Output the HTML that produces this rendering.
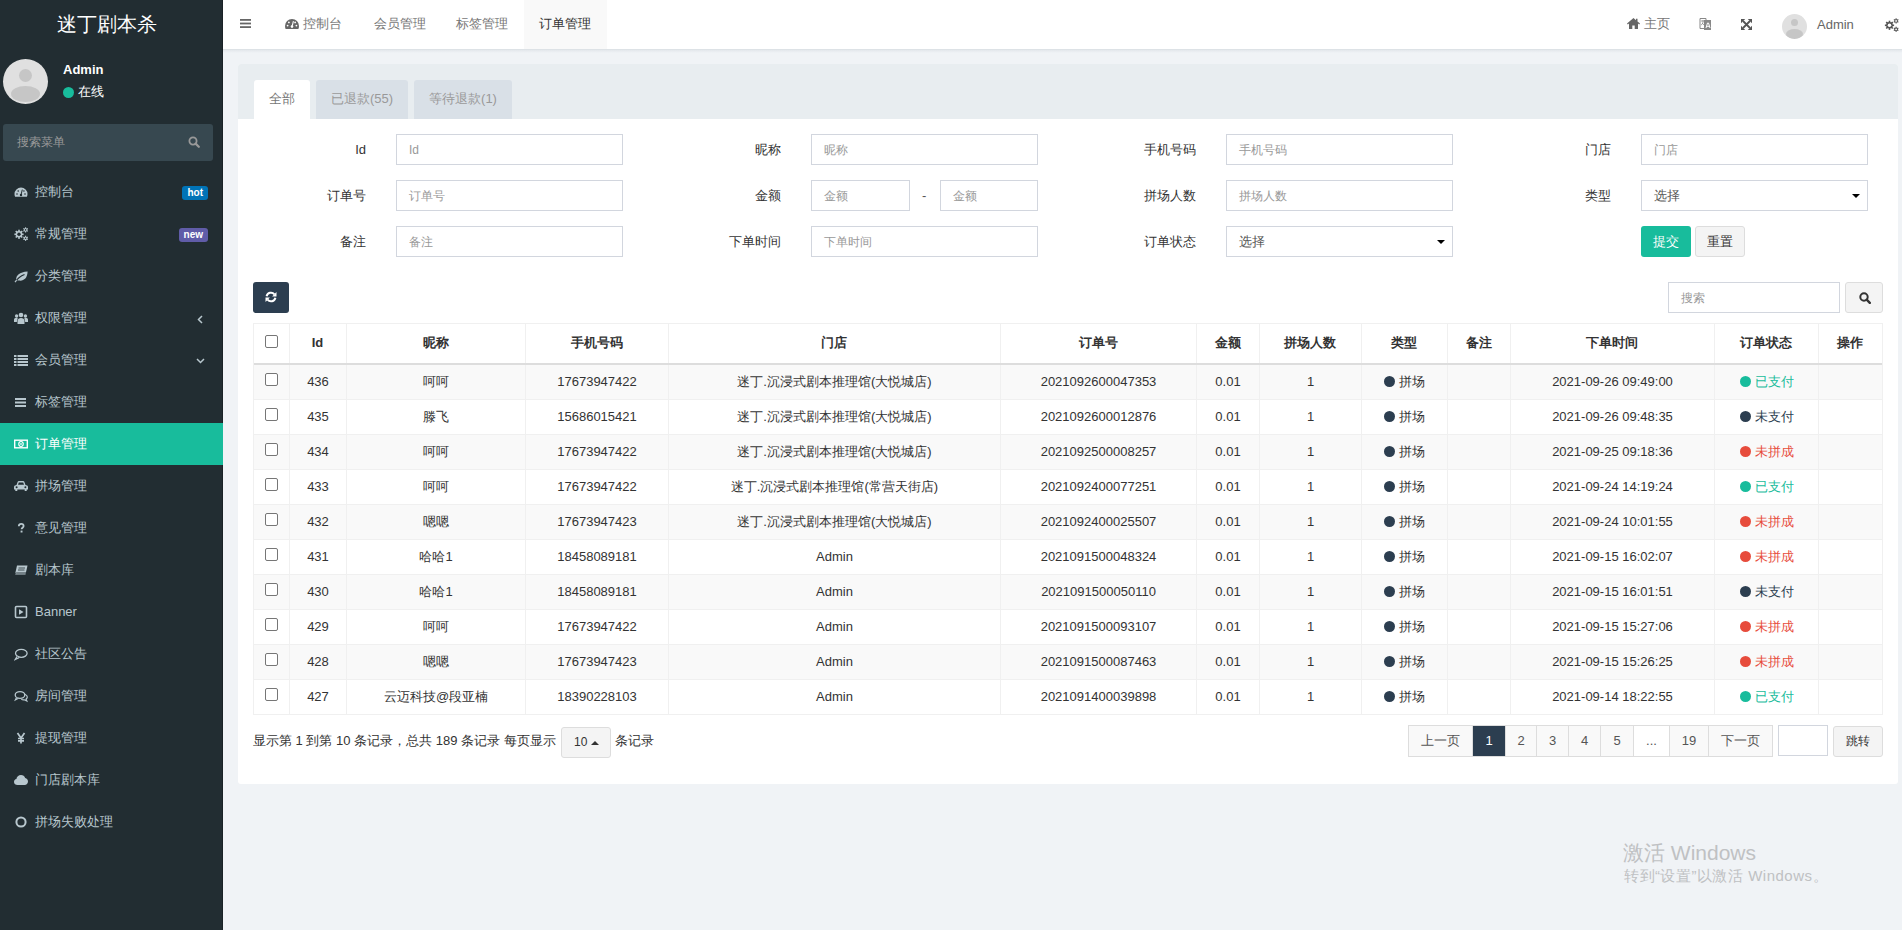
<!DOCTYPE html>
<html>
<head>
<meta charset="utf-8">
<style>
*{box-sizing:border-box;}
html,body{margin:0;padding:0;}
body{width:1902px;height:930px;overflow:hidden;position:relative;background:#f0f3f6;font-family:"Liberation Sans",sans-serif;font-size:13px;color:#333;}
.abs{position:absolute;}
svg{display:block;}
/* sidebar */
#side{position:absolute;left:0;top:0;width:223px;height:930px;background:#222d32;}
#side .edge{position:absolute;right:0;top:0;width:1px;height:930px;background:#1a2226;}
#logo{position:absolute;left:0;top:-1px;width:214px;height:50px;line-height:50px;text-align:center;color:#fff;font-size:20px;}
.menu{position:absolute;left:0;top:171px;width:223px;}
.mi{position:relative;height:42px;color:#b8c7ce;}
.mi .ic{position:absolute;left:14px;top:14px;width:14px;height:14px;}
.mi .tx{position:absolute;left:35px;top:13px;line-height:15px;}
.mi.act{background:#18bc9c;color:#fff;}
.badge{position:absolute;right:15px;top:15px;height:14px;line-height:14px;padding:0 5px;border-radius:3px;color:#fff;font-size:10px;font-weight:bold;}
/* header */
#hdr{position:absolute;left:223px;top:0;width:1679px;height:49px;background:#fff;}
#hdrline{position:absolute;left:223px;top:49px;width:1679px;height:4px;background:linear-gradient(#d9dee2,#e6eaee 40%,#f0f3f6);}
.nav{position:absolute;top:0;height:49px;line-height:48px;color:#777;}
/* panel */
#panel{position:absolute;left:238px;top:64px;width:1660px;height:720px;background:#fff;border-radius:3px;}
#ph{position:absolute;left:0;top:0;width:1660px;height:55px;background:#e8edf0;border-radius:3px 3px 0 0;}
.tab{position:absolute;top:16px;height:39px;line-height:37px;text-align:center;border-radius:3px 3px 0 0;color:#999;background:#d9e0e7;}
.tab.act{background:#fff;color:#777;}
.lbl{position:absolute;text-align:right;color:#333;line-height:31px;height:31px;}
.inp{position:absolute;height:31px;border:1px solid #d2d6de;background:#fff;color:#999;padding-left:12px;line-height:30px;font-size:12px;}
.sel{color:#555;font-size:13px;}
.caret{position:absolute;right:7px;top:13px;width:0;height:0;border-left:4px solid transparent;border-right:4px solid transparent;border-top:4px solid #000;}
.th{position:absolute;text-align:center;font-weight:bold;line-height:16px;color:#333;}
.td{position:absolute;text-align:center;line-height:16px;color:#333;white-space:nowrap;padding-left:1px;}
.cb{position:absolute;width:13px;height:13px;border:1px solid #767676;border-radius:2px;background:#fff;}
.vl{width:1px;background:#f0f0f0;}
.hl{height:1px;background:#f0f0f0;}
.dot{display:inline-block;width:11px;height:11px;border-radius:50%;margin-right:4px;vertical-align:-1px;}
.pgi{position:absolute;top:661px;height:32px;line-height:30px;text-align:center;border:1px solid #ddd;}
.btn{}
</style>
</head>
<body>

<!-- SIDEBAR -->
<div id="side">
  <div class="edge"></div>
  <div id="logo">迷丁剧本杀</div>
  <!-- avatar -->
  <div class="abs" style="left:3px;top:59px;width:45px;height:45px;border-radius:50%;background:#e0e0e0;overflow:hidden;">
    <div class="abs" style="left:16px;top:10px;width:13px;height:13px;border-radius:50%;background:#c6c6c6;"></div>
    <div class="abs" style="left:8px;top:27px;width:29px;height:16px;border-radius:50%;background:#c6c6c6;"></div>
  </div>
  <div class="abs" style="left:63px;top:62px;color:#fff;font-weight:bold;font-size:13px;line-height:16px;">Admin</div>
  <div class="abs" style="left:63px;top:87px;width:11px;height:11px;border-radius:50%;background:#18bc9c;"></div>
  <div class="abs" style="left:78px;top:84px;color:#fff;font-size:13px;line-height:16px;">在线</div>
  <!-- search -->
  <div class="abs" style="left:3px;top:124px;width:210px;height:37px;background:#374850;border-radius:3px;">
    <div class="abs" style="left:14px;top:11px;color:#999;font-size:12px;line-height:14px;">搜索菜单</div>
    <svg class="abs" style="left:185px;top:12px" width="12" height="12" viewBox="0 0 12 12"><circle cx="5" cy="5" r="3.6" fill="none" stroke="#999" stroke-width="1.8"/><path d="M7.6 7.6L10.8 10.8" stroke="#999" stroke-width="2.2" stroke-linecap="round"/></svg>
  </div>
  <div class="menu">
    <div class="mi"><svg class="ic" viewBox="0 0 14 14"><path d="M7 2.5A6.5 6.5 0 0 0 .5 9c0 1 .2 2 .6 2.8h11.8c.4-.8.6-1.8.6-2.8A6.5 6.5 0 0 0 7 2.5z" fill="#b8c7ce"/><circle cx="7" cy="10" r="1.2" fill="#222d32"/><path d="M7 10L8.3 4.6" stroke="#222d32" stroke-width="1"/><circle cx="3" cy="9" r=".8" fill="#222d32"/><circle cx="4.2" cy="6" r=".8" fill="#222d32"/><circle cx="11" cy="9" r=".8" fill="#222d32"/><circle cx="9.9" cy="6" r=".8" fill="#222d32"/></svg><span class="tx">控制台</span><span class="badge" style="background:#0073b7;">hot</span></div>
    <div class="mi"><svg class="ic" viewBox="0 0 14 14"><circle cx="5" cy="7.3" r="3.3" fill="#b8c7ce"/><rect x="4.2" y="2.7" width="1.6" height="2.3" fill="#b8c7ce" transform="rotate(0.0 5 7.3)"/><rect x="4.2" y="2.7" width="1.6" height="2.3" fill="#b8c7ce" transform="rotate(45.0 5 7.3)"/><rect x="4.2" y="2.7" width="1.6" height="2.3" fill="#b8c7ce" transform="rotate(90.0 5 7.3)"/><rect x="4.2" y="2.7" width="1.6" height="2.3" fill="#b8c7ce" transform="rotate(135.0 5 7.3)"/><rect x="4.2" y="2.7" width="1.6" height="2.3" fill="#b8c7ce" transform="rotate(180.0 5 7.3)"/><rect x="4.2" y="2.7" width="1.6" height="2.3" fill="#b8c7ce" transform="rotate(225.0 5 7.3)"/><rect x="4.2" y="2.7" width="1.6" height="2.3" fill="#b8c7ce" transform="rotate(270.0 5 7.3)"/><rect x="4.2" y="2.7" width="1.6" height="2.3" fill="#b8c7ce" transform="rotate(315.0 5 7.3)"/><circle cx="5" cy="7.3" r="1.7" fill="#222d32"/><circle cx="11.6" cy="2.9" r="1.7" fill="#b8c7ce"/><rect x="11.049999999999999" y="0.29999999999999993" width="1.1" height="1.9" fill="#b8c7ce" transform="rotate(0.0 11.6 2.9)"/><rect x="11.049999999999999" y="0.29999999999999993" width="1.1" height="1.9" fill="#b8c7ce" transform="rotate(60.0 11.6 2.9)"/><rect x="11.049999999999999" y="0.29999999999999993" width="1.1" height="1.9" fill="#b8c7ce" transform="rotate(120.0 11.6 2.9)"/><rect x="11.049999999999999" y="0.29999999999999993" width="1.1" height="1.9" fill="#b8c7ce" transform="rotate(180.0 11.6 2.9)"/><rect x="11.049999999999999" y="0.29999999999999993" width="1.1" height="1.9" fill="#b8c7ce" transform="rotate(240.0 11.6 2.9)"/><rect x="11.049999999999999" y="0.29999999999999993" width="1.1" height="1.9" fill="#b8c7ce" transform="rotate(300.0 11.6 2.9)"/><circle cx="11.6" cy="2.9" r="0.8" fill="#222d32"/><circle cx="11.6" cy="11.3" r="1.7" fill="#b8c7ce"/><rect x="11.049999999999999" y="8.700000000000001" width="1.1" height="1.9" fill="#b8c7ce" transform="rotate(0.0 11.6 11.3)"/><rect x="11.049999999999999" y="8.700000000000001" width="1.1" height="1.9" fill="#b8c7ce" transform="rotate(60.0 11.6 11.3)"/><rect x="11.049999999999999" y="8.700000000000001" width="1.1" height="1.9" fill="#b8c7ce" transform="rotate(120.0 11.6 11.3)"/><rect x="11.049999999999999" y="8.700000000000001" width="1.1" height="1.9" fill="#b8c7ce" transform="rotate(180.0 11.6 11.3)"/><rect x="11.049999999999999" y="8.700000000000001" width="1.1" height="1.9" fill="#b8c7ce" transform="rotate(240.0 11.6 11.3)"/><rect x="11.049999999999999" y="8.700000000000001" width="1.1" height="1.9" fill="#b8c7ce" transform="rotate(300.0 11.6 11.3)"/><circle cx="11.6" cy="11.3" r="0.8" fill="#222d32"/></svg><span class="tx">常规管理</span><span class="badge" style="background:#605ca8;">new</span></div>
    <div class="mi"><svg class="ic" viewBox="0 0 14 14"><path d="M2.2 11.2C1.8 6.5 5.5 3.2 13.6 2.6 13.4 9.5 9.6 12.2 5.2 11.6c-1 0-1.8-.3-2.4-.6z" fill="#b8c7ce"/><path d="M1 13.2C3.5 9.5 6.5 7 10.5 5.5" fill="none" stroke="#222d32" stroke-width="1.1"/><path d="M1 13.2l1.6-2" stroke="#b8c7ce" stroke-width="1.2"/></svg><span class="tx">分类管理</span></div>
    <div class="mi"><svg class="ic" viewBox="0 0 14 14"><circle cx="7" cy="4" r="2.3" fill="#b8c7ce"/><circle cx="2.6" cy="5" r="1.7" fill="#b8c7ce"/><circle cx="11.4" cy="5" r="1.7" fill="#b8c7ce"/><path d="M3.5 13v-3c0-2 1.5-3 3.5-3s3.5 1 3.5 3v3z" fill="#b8c7ce"/><path d="M0 11V9c0-1.5.8-2.3 2.5-2.3 1 0 1.2.3 1.2.3L2.8 11z" fill="#b8c7ce"/><path d="M14 11V9c0-1.5-.8-2.3-2.5-2.3-1 0-1.2.3-1.2.3l.9 4z" fill="#b8c7ce"/></svg><span class="tx">权限管理</span>
      <svg class="abs" style="left:197px;top:18px" width="6" height="9" viewBox="0 0 6 9"><path d="M5 1L1.5 4.5 5 8" fill="none" stroke="#b8c7ce" stroke-width="1.5"/></svg></div>
    <div class="mi"><svg class="ic" viewBox="0 0 14 14"><rect x="0" y="2" width="2.5" height="2" fill="#b8c7ce"/><rect x="3.5" y="2" width="10.5" height="2" fill="#b8c7ce"/><rect x="0" y="5" width="2.5" height="2" fill="#b8c7ce"/><rect x="3.5" y="5" width="10.5" height="2" fill="#b8c7ce"/><rect x="0" y="8" width="2.5" height="2" fill="#b8c7ce"/><rect x="3.5" y="8" width="10.5" height="2" fill="#b8c7ce"/><rect x="0" y="11" width="2.5" height="2" fill="#b8c7ce"/><rect x="3.5" y="11" width="10.5" height="2" fill="#b8c7ce"/></svg><span class="tx">会员管理</span>
      <svg class="abs" style="left:196px;top:19px" width="9" height="6" viewBox="0 0 9 6"><path d="M1 1l3.5 3.5L8 1" fill="none" stroke="#b8c7ce" stroke-width="1.5"/></svg></div>
    <div class="mi"><svg class="ic" viewBox="0 0 14 14"><rect x="1" y="3" width="11" height="2" fill="#b8c7ce"/><rect x="1" y="6.5" width="11" height="2" fill="#b8c7ce"/><rect x="1" y="10" width="11" height="2" fill="#b8c7ce"/></svg><span class="tx">标签管理</span></div>
    <div class="mi act"><svg class="ic" viewBox="0 0 14 14"><rect x="0" y="2.5" width="14" height="9" fill="#fff"/><rect x="1.4" y="3.9" width="11.2" height="6.2" fill="#18bc9c"/><ellipse cx="7" cy="7" rx="2.8" ry="2.9" fill="#fff"/><ellipse cx="7" cy="7" rx="1.2" ry="1.7" fill="none" stroke="#18bc9c" stroke-width=".9"/></svg><span class="tx">订单管理</span></div>
    <div class="mi"><svg class="ic" viewBox="0 0 14 14"><path d="M2.5 6l1.2-3.2c.2-.5.6-.8 1.2-.8h4.2c.6 0 1 .3 1.2.8L11.5 6c1 .2 2.5.6 2.5 2v2.5h-1.3V12h-2v-1.5H3.3V12h-2v-1.5H0V8c0-1.4 1.5-1.8 2.5-2z" fill="#b8c7ce"/><path d="M4 5.8l.8-2.3h4.4l.8 2.3z" fill="#222d32"/><circle cx="2.6" cy="8.2" r="1" fill="#222d32"/><circle cx="11.4" cy="8.2" r="1" fill="#222d32"/></svg><span class="tx">拼场管理</span></div>
    <div class="mi"><svg class="ic" viewBox="0 0 14 14"><path d="M4.8 5.2c0-1.5 1-2.4 2.4-2.4S9.6 3.6 9.6 5c0 1.6-2 1.8-2 3.2" fill="none" stroke="#b8c7ce" stroke-width="1.8"/><rect x="6.6" y="9.6" width="1.9" height="1.9" fill="#b8c7ce"/></svg><span class="tx">意见管理</span></div>
    <div class="mi"><svg class="ic" viewBox="0 0 14 14"><path d="M3 2.5h10.5L11.5 11.5H1z" fill="#b8c7ce"/><path d="M1 11.5c0-1 .5-1.5 1.5-1.5H12" fill="none" stroke="#222d32" stroke-width=".9"/><path d="M4.5 5h6.5M4 7h6.5" stroke="#222d32" stroke-width=".8"/></svg><span class="tx">剧本库</span></div>
    <div class="mi"><svg class="ic" viewBox="0 0 14 14"><rect x="1.5" y="1.5" width="11" height="11" rx="1" fill="none" stroke="#b8c7ce" stroke-width="1.6"/><path d="M5 4.3v5.4L9.5 7z" fill="#b8c7ce"/></svg><span class="tx">Banner</span></div>
    <div class="mi"><svg class="ic" viewBox="0 0 14 14"><ellipse cx="7.3" cy="6.3" rx="5.8" ry="4" fill="none" stroke="#b8c7ce" stroke-width="1.3"/><path d="M3 9.5L1.2 12.5 5 10.6" fill="#222d32" stroke="#b8c7ce" stroke-width="1.2"/></svg><span class="tx">社区公告</span></div>
    <div class="mi"><svg class="ic" viewBox="0 0 14 14"><ellipse cx="6" cy="6" rx="4.8" ry="3.4" fill="none" stroke="#b8c7ce" stroke-width="1.3"/><path d="M2.5 8.5L1.3 11 4.5 9.3" fill="#222d32" stroke="#b8c7ce" stroke-width="1.1"/><path d="M10.8 5.2c1.6.6 2.5 1.6 2.5 2.8 0 .9-.5 1.6-1.2 2.1l.8 2-2.6-1.3c-1 .1-2.2-.1-3-.6" fill="none" stroke="#b8c7ce" stroke-width="1.2"/></svg><span class="tx">房间管理</span></div>
    <div class="mi"><svg class="ic" viewBox="0 0 14 14"><path d="M3.5 2l3.5 5 3.5-5M7 7v5.5M4 7.5h6M4 9.8h6" fill="none" stroke="#b8c7ce" stroke-width="1.7"/></svg><span class="tx">提现管理</span></div>
    <div class="mi"><svg class="ic" viewBox="0 0 14 14"><path d="M3.5 12C1.6 12 0 10.7 0 9c0-1.5 1-2.6 2.4-2.9C2.6 3.8 4.5 2 7 2c2 0 3.6 1.2 4.2 3C12.9 5.3 14 6.8 14 8.5 14 10.4 12.5 12 10.6 12z" fill="#b8c7ce"/></svg><span class="tx">门店剧本库</span></div>
    <div class="mi"><svg class="ic" viewBox="0 0 14 14"><circle cx="7" cy="7" r="4.6" fill="none" stroke="#b8c7ce" stroke-width="2"/></svg><span class="tx">拼场失败处理</span></div>
  </div>
</div>

<!-- HEADER -->
<div id="hdr">
  <svg class="abs" style="left:17px;top:19px" width="11" height="9" viewBox="0 0 12 10" preserveAspectRatio="none"><rect x="0" y="0" width="12" height="2" fill="#666"/><rect x="0" y="4" width="12" height="2" fill="#666"/><rect x="0" y="8" width="12" height="2" fill="#666"/></svg>
  <svg class="abs" style="left:62px;top:19px" width="14" height="10" viewBox="0 0 14 10"><path d="M7 0A7 7 0 0 0 0 7c0 1.1.2 2.1.6 3h12.8c.4-.9.6-1.9.6-3A7 7 0 0 0 7 0z" fill="#666"/><circle cx="7" cy="7.6" r="1.3" fill="#fff"/><path d="M7 7.6L8.4 2.2" stroke="#fff" stroke-width="1.1"/><circle cx="2.6" cy="6.6" r=".9" fill="#fff"/><circle cx="3.9" cy="3.4" r=".9" fill="#fff"/><circle cx="11.4" cy="6.6" r=".9" fill="#fff"/><circle cx="10.1" cy="3.4" r=".9" fill="#fff"/></svg>
  <div class="nav" style="left:80px;color:#777;">控制台</div>
  <div class="nav" style="left:151px;color:#777;">会员管理</div>
  <div class="nav" style="left:233px;color:#777;">标签管理</div>
  <div class="abs" style="left:301px;top:0;width:83px;height:49px;background:#f9f9f9;"></div>
  <div class="nav" style="left:316px;color:#333;">订单管理</div>
  <svg class="abs" style="left:1404px;top:18px" width="13" height="11" viewBox="0 0 13 11"><path d="M6.5 0L0 5.6l.8.9L2 5.5V11h3.3V7.6h2.4V11H11V5.5l1.2 1 .8-.9L10.5 3.5V.8H9v1.4z" fill="#666"/></svg>
  <div class="nav" style="left:1421px;color:#777;">主页</div>
  <svg class="abs" style="left:1476px;top:17px" width="13" height="14" viewBox="0 0 13 14"><path d="M1 1.5h6v10H1z" fill="none" stroke="#888" stroke-width="1"/><path d="M5 3h7v10H5z" fill="#888"/><path d="M7 11l1.5-5h1l1.5 5M7.6 9.3h2.8" stroke="#fff" stroke-width="1" fill="none"/><path d="M2 4h4M4 3v1.5c0 2-1 3-2 3.5M3 6c.7 1 1.5 1.6 2.5 2" stroke="#888" stroke-width=".8" fill="none"/></svg>
  <svg class="abs" style="left:1518px;top:19px" width="11" height="11" viewBox="0 0 12 12"><path d="M2.2 2.2L9.8 9.8M9.8 2.2L2.2 9.8" stroke="#555" stroke-width="2"/><path d="M0 0h4.6L0 4.6zM12 0v4.6L7.4 0zM0 12V7.4L4.6 12zM12 12H7.4L12 7.4z" fill="#555"/></svg>
  <div class="abs" style="left:1559px;top:14px;width:25px;height:25px;border-radius:50%;background:#e0e0e0;overflow:hidden;">
    <div class="abs" style="left:9px;top:5px;width:7px;height:7px;border-radius:50%;background:#c6c6c6;"></div>
    <div class="abs" style="left:4px;top:15px;width:17px;height:10px;border-radius:50%;background:#c6c6c6;"></div>
  </div>
  <div class="nav" style="left:1594px;top:1px;color:#666;">Admin</div>
  <svg class="abs" style="left:1661px;top:18px" width="15" height="14" viewBox="0 0 14 14"><circle cx="5" cy="7.3" r="3.3" fill="#555"/><rect x="4.2" y="2.7" width="1.6" height="2.3" fill="#555" transform="rotate(0.0 5 7.3)"/><rect x="4.2" y="2.7" width="1.6" height="2.3" fill="#555" transform="rotate(45.0 5 7.3)"/><rect x="4.2" y="2.7" width="1.6" height="2.3" fill="#555" transform="rotate(90.0 5 7.3)"/><rect x="4.2" y="2.7" width="1.6" height="2.3" fill="#555" transform="rotate(135.0 5 7.3)"/><rect x="4.2" y="2.7" width="1.6" height="2.3" fill="#555" transform="rotate(180.0 5 7.3)"/><rect x="4.2" y="2.7" width="1.6" height="2.3" fill="#555" transform="rotate(225.0 5 7.3)"/><rect x="4.2" y="2.7" width="1.6" height="2.3" fill="#555" transform="rotate(270.0 5 7.3)"/><rect x="4.2" y="2.7" width="1.6" height="2.3" fill="#555" transform="rotate(315.0 5 7.3)"/><circle cx="5" cy="7.3" r="1.8" fill="#fff"/><circle cx="11.6" cy="2.9" r="1.7" fill="#555"/><rect x="11.049999999999999" y="0.29999999999999993" width="1.1" height="1.9" fill="#555" transform="rotate(0.0 11.6 2.9)"/><rect x="11.049999999999999" y="0.29999999999999993" width="1.1" height="1.9" fill="#555" transform="rotate(60.0 11.6 2.9)"/><rect x="11.049999999999999" y="0.29999999999999993" width="1.1" height="1.9" fill="#555" transform="rotate(120.0 11.6 2.9)"/><rect x="11.049999999999999" y="0.29999999999999993" width="1.1" height="1.9" fill="#555" transform="rotate(180.0 11.6 2.9)"/><rect x="11.049999999999999" y="0.29999999999999993" width="1.1" height="1.9" fill="#555" transform="rotate(240.0 11.6 2.9)"/><rect x="11.049999999999999" y="0.29999999999999993" width="1.1" height="1.9" fill="#555" transform="rotate(300.0 11.6 2.9)"/><circle cx="11.6" cy="2.9" r="0.9" fill="#fff"/><circle cx="11.6" cy="11.3" r="1.7" fill="#555"/><rect x="11.049999999999999" y="8.700000000000001" width="1.1" height="1.9" fill="#555" transform="rotate(0.0 11.6 11.3)"/><rect x="11.049999999999999" y="8.700000000000001" width="1.1" height="1.9" fill="#555" transform="rotate(60.0 11.6 11.3)"/><rect x="11.049999999999999" y="8.700000000000001" width="1.1" height="1.9" fill="#555" transform="rotate(120.0 11.6 11.3)"/><rect x="11.049999999999999" y="8.700000000000001" width="1.1" height="1.9" fill="#555" transform="rotate(180.0 11.6 11.3)"/><rect x="11.049999999999999" y="8.700000000000001" width="1.1" height="1.9" fill="#555" transform="rotate(240.0 11.6 11.3)"/><rect x="11.049999999999999" y="8.700000000000001" width="1.1" height="1.9" fill="#555" transform="rotate(300.0 11.6 11.3)"/><circle cx="11.6" cy="11.3" r="0.9" fill="#fff"/></svg>
</div>
<div id="hdrline"></div>

<!-- PANEL -->
<div id="panel">
  <div id="ph">
    <div class="tab act" style="left:16px;width:56px;">全部</div>
    <div class="tab" style="left:78px;width:92px;">已退款(55)</div>
    <div class="tab" style="left:176px;width:98px;">等待退款(1)</div>
  </div>
<div class="lbl" style="left:8px;top:70px;width:120px;">Id</div>
<div class="inp" style="left:158px;top:70px;width:227px;">Id</div>
<div class="lbl" style="left:423px;top:70px;width:120px;">昵称</div>
<div class="inp" style="left:573px;top:70px;width:227px;">昵称</div>
<div class="lbl" style="left:838px;top:70px;width:120px;">手机号码</div>
<div class="inp" style="left:988px;top:70px;width:227px;">手机号码</div>
<div class="lbl" style="left:1253px;top:70px;width:120px;">门店</div>
<div class="inp" style="left:1403px;top:70px;width:227px;">门店</div>
<div class="lbl" style="left:8px;top:116px;width:120px;">订单号</div>
<div class="inp" style="left:158px;top:116px;width:227px;">订单号</div>
<div class="lbl" style="left:423px;top:116px;width:120px;">金额</div>
<div class="inp" style="left:573px;top:116px;width:99px;">金额</div>
<div class="abs" style="left:684px;top:116px;line-height:31px;color:#555;">-</div>
<div class="inp" style="left:702px;top:116px;width:98px;">金额</div>
<div class="lbl" style="left:838px;top:116px;width:120px;">拼场人数</div>
<div class="inp" style="left:988px;top:116px;width:227px;">拼场人数</div>
<div class="lbl" style="left:1253px;top:116px;width:120px;">类型</div>
<div class="inp sel" style="left:1403px;top:116px;width:227px;">选择<span class="caret"></span></div>
<div class="lbl" style="left:8px;top:162px;width:120px;">备注</div>
<div class="inp" style="left:158px;top:162px;width:227px;">备注</div>
<div class="lbl" style="left:423px;top:162px;width:120px;">下单时间</div>
<div class="inp" style="left:573px;top:162px;width:227px;">下单时间</div>
<div class="lbl" style="left:838px;top:162px;width:120px;">订单状态</div>
<div class="inp sel" style="left:988px;top:162px;width:227px;">选择<span class="caret"></span></div>
<div class="abs btn" style="left:1403px;top:162px;width:50px;height:31px;background:#18bc9c;color:#fff;border-radius:3px;text-align:center;line-height:31px;">提交</div>
<div class="abs btn" style="left:1457px;top:162px;width:50px;height:31px;background:#f4f4f4;border:1px solid #ddd;color:#333;border-radius:3px;text-align:center;line-height:29px;">重置</div>
<div class="abs" style="left:15px;top:218px;width:36px;height:31px;background:#2c3e50;border-radius:3px;">
<svg class="abs" style="left:12px;top:9px" width="12" height="12" viewBox="0 0 12 12"><path d="M1.6 5.2A4.4 4.4 0 0 1 9.4 3.4" fill="none" stroke="#fff" stroke-width="2"/><path d="M11.5 1v4.4H7.1z" fill="#fff"/><path d="M10.4 6.8A4.4 4.4 0 0 1 2.6 8.6" fill="none" stroke="#fff" stroke-width="2"/><path d="M0.5 11V6.6h4.4z" fill="#fff"/></svg></div>
<div class="inp" style="left:1430px;top:218px;width:172px;">搜索</div>
<div class="abs" style="left:1607px;top:218px;width:38px;height:31px;background:#f4f4f4;border:1px solid #ddd;border-radius:3px;">
<svg class="abs" style="left:13px;top:9px" width="12" height="12" viewBox="0 0 12 12"><circle cx="5" cy="5" r="3.7" fill="none" stroke="#333" stroke-width="2"/><path d="M7.7 7.7L10.8 10.8" stroke="#333" stroke-width="2.4" stroke-linecap="round"/></svg></div>
<div class="abs" style="left:16px;top:301px;width:1628px;height:34px;background:#f9f9f9;"></div>
<div class="abs" style="left:16px;top:371px;width:1628px;height:34px;background:#f9f9f9;"></div>
<div class="abs" style="left:16px;top:441px;width:1628px;height:34px;background:#f9f9f9;"></div>
<div class="abs" style="left:16px;top:511px;width:1628px;height:34px;background:#f9f9f9;"></div>
<div class="abs" style="left:16px;top:581px;width:1628px;height:34px;background:#f9f9f9;"></div>
<div class="abs" style="left:15px;top:259px;width:1630px;height:392px;border:1px solid #f0f0f0;"></div>
<div class="abs vl" style="left:51px;top:260px;height:390px;"></div>
<div class="abs vl" style="left:108px;top:260px;height:390px;"></div>
<div class="abs vl" style="left:287px;top:260px;height:390px;"></div>
<div class="abs vl" style="left:430px;top:260px;height:390px;"></div>
<div class="abs vl" style="left:762px;top:260px;height:390px;"></div>
<div class="abs vl" style="left:958px;top:260px;height:390px;"></div>
<div class="abs vl" style="left:1021px;top:260px;height:390px;"></div>
<div class="abs vl" style="left:1123px;top:260px;height:390px;"></div>
<div class="abs vl" style="left:1209px;top:260px;height:390px;"></div>
<div class="abs vl" style="left:1272px;top:260px;height:390px;"></div>
<div class="abs vl" style="left:1476px;top:260px;height:390px;"></div>
<div class="abs vl" style="left:1580px;top:260px;height:390px;"></div>
<div class="abs" style="left:16px;top:299px;width:1628px;height:2px;background:#ddd;"></div>
<div class="cb" style="left:27px;top:271px;"></div>
<div class="th" style="left:51px;top:271px;width:57px;">Id</div>
<div class="th" style="left:108px;top:271px;width:179px;">昵称</div>
<div class="th" style="left:287px;top:271px;width:143px;">手机号码</div>
<div class="th" style="left:430px;top:271px;width:332px;">门店</div>
<div class="th" style="left:762px;top:271px;width:196px;">订单号</div>
<div class="th" style="left:958px;top:271px;width:63px;">金额</div>
<div class="th" style="left:1021px;top:271px;width:102px;">拼场人数</div>
<div class="th" style="left:1123px;top:271px;width:86px;">类型</div>
<div class="th" style="left:1209px;top:271px;width:63px;">备注</div>
<div class="th" style="left:1272px;top:271px;width:204px;">下单时间</div>
<div class="th" style="left:1476px;top:271px;width:104px;">订单状态</div>
<div class="th" style="left:1580px;top:271px;width:64px;">操作</div>
<div class="cb" style="left:27px;top:309px;"></div>
<div class="td" style="left:51px;top:310px;width:57px;">436</div>
<div class="td" style="left:108px;top:310px;width:179px;">呵呵</div>
<div class="td" style="left:287px;top:310px;width:143px;">17673947422</div>
<div class="td" style="left:430px;top:310px;width:332px;">迷丁.沉浸式剧本推理馆(大悦城店)</div>
<div class="td" style="left:762px;top:310px;width:196px;">2021092600047353</div>
<div class="td" style="left:958px;top:310px;width:63px;">0.01</div>
<div class="td" style="left:1021px;top:310px;width:102px;">1</div>
<div class="td" style="left:1123px;top:310px;width:86px;"><span class="dot" style="background:#2c3e50"></span>拼场</div>
<div class="td" style="left:1272px;top:310px;width:204px;">2021-09-26 09:49:00</div>
<div class="td" style="left:1476px;top:310px;width:104px;"><span style="color:#18bc9c"><span class="dot" style="background:#18bc9c"></span>已支付</span></div>
<div class="abs hl" style="left:16px;top:335px;width:1628px;"></div>
<div class="cb" style="left:27px;top:344px;"></div>
<div class="td" style="left:51px;top:345px;width:57px;">435</div>
<div class="td" style="left:108px;top:345px;width:179px;">滕飞</div>
<div class="td" style="left:287px;top:345px;width:143px;">15686015421</div>
<div class="td" style="left:430px;top:345px;width:332px;">迷丁.沉浸式剧本推理馆(大悦城店)</div>
<div class="td" style="left:762px;top:345px;width:196px;">2021092600012876</div>
<div class="td" style="left:958px;top:345px;width:63px;">0.01</div>
<div class="td" style="left:1021px;top:345px;width:102px;">1</div>
<div class="td" style="left:1123px;top:345px;width:86px;"><span class="dot" style="background:#2c3e50"></span>拼场</div>
<div class="td" style="left:1272px;top:345px;width:204px;">2021-09-26 09:48:35</div>
<div class="td" style="left:1476px;top:345px;width:104px;"><span style="color:#2c3e50"><span class="dot" style="background:#2c3e50"></span>未支付</span></div>
<div class="abs hl" style="left:16px;top:370px;width:1628px;"></div>
<div class="cb" style="left:27px;top:379px;"></div>
<div class="td" style="left:51px;top:380px;width:57px;">434</div>
<div class="td" style="left:108px;top:380px;width:179px;">呵呵</div>
<div class="td" style="left:287px;top:380px;width:143px;">17673947422</div>
<div class="td" style="left:430px;top:380px;width:332px;">迷丁.沉浸式剧本推理馆(大悦城店)</div>
<div class="td" style="left:762px;top:380px;width:196px;">2021092500008257</div>
<div class="td" style="left:958px;top:380px;width:63px;">0.01</div>
<div class="td" style="left:1021px;top:380px;width:102px;">1</div>
<div class="td" style="left:1123px;top:380px;width:86px;"><span class="dot" style="background:#2c3e50"></span>拼场</div>
<div class="td" style="left:1272px;top:380px;width:204px;">2021-09-25 09:18:36</div>
<div class="td" style="left:1476px;top:380px;width:104px;"><span style="color:#e74c3c"><span class="dot" style="background:#e74c3c"></span>未拼成</span></div>
<div class="abs hl" style="left:16px;top:405px;width:1628px;"></div>
<div class="cb" style="left:27px;top:414px;"></div>
<div class="td" style="left:51px;top:415px;width:57px;">433</div>
<div class="td" style="left:108px;top:415px;width:179px;">呵呵</div>
<div class="td" style="left:287px;top:415px;width:143px;">17673947422</div>
<div class="td" style="left:430px;top:415px;width:332px;">迷丁.沉浸式剧本推理馆(常营天街店)</div>
<div class="td" style="left:762px;top:415px;width:196px;">2021092400077251</div>
<div class="td" style="left:958px;top:415px;width:63px;">0.01</div>
<div class="td" style="left:1021px;top:415px;width:102px;">1</div>
<div class="td" style="left:1123px;top:415px;width:86px;"><span class="dot" style="background:#2c3e50"></span>拼场</div>
<div class="td" style="left:1272px;top:415px;width:204px;">2021-09-24 14:19:24</div>
<div class="td" style="left:1476px;top:415px;width:104px;"><span style="color:#18bc9c"><span class="dot" style="background:#18bc9c"></span>已支付</span></div>
<div class="abs hl" style="left:16px;top:440px;width:1628px;"></div>
<div class="cb" style="left:27px;top:449px;"></div>
<div class="td" style="left:51px;top:450px;width:57px;">432</div>
<div class="td" style="left:108px;top:450px;width:179px;">嗯嗯</div>
<div class="td" style="left:287px;top:450px;width:143px;">17673947423</div>
<div class="td" style="left:430px;top:450px;width:332px;">迷丁.沉浸式剧本推理馆(大悦城店)</div>
<div class="td" style="left:762px;top:450px;width:196px;">2021092400025507</div>
<div class="td" style="left:958px;top:450px;width:63px;">0.01</div>
<div class="td" style="left:1021px;top:450px;width:102px;">1</div>
<div class="td" style="left:1123px;top:450px;width:86px;"><span class="dot" style="background:#2c3e50"></span>拼场</div>
<div class="td" style="left:1272px;top:450px;width:204px;">2021-09-24 10:01:55</div>
<div class="td" style="left:1476px;top:450px;width:104px;"><span style="color:#e74c3c"><span class="dot" style="background:#e74c3c"></span>未拼成</span></div>
<div class="abs hl" style="left:16px;top:475px;width:1628px;"></div>
<div class="cb" style="left:27px;top:484px;"></div>
<div class="td" style="left:51px;top:485px;width:57px;">431</div>
<div class="td" style="left:108px;top:485px;width:179px;">哈哈1</div>
<div class="td" style="left:287px;top:485px;width:143px;">18458089181</div>
<div class="td" style="left:430px;top:485px;width:332px;">Admin</div>
<div class="td" style="left:762px;top:485px;width:196px;">2021091500048324</div>
<div class="td" style="left:958px;top:485px;width:63px;">0.01</div>
<div class="td" style="left:1021px;top:485px;width:102px;">1</div>
<div class="td" style="left:1123px;top:485px;width:86px;"><span class="dot" style="background:#2c3e50"></span>拼场</div>
<div class="td" style="left:1272px;top:485px;width:204px;">2021-09-15 16:02:07</div>
<div class="td" style="left:1476px;top:485px;width:104px;"><span style="color:#e74c3c"><span class="dot" style="background:#e74c3c"></span>未拼成</span></div>
<div class="abs hl" style="left:16px;top:510px;width:1628px;"></div>
<div class="cb" style="left:27px;top:519px;"></div>
<div class="td" style="left:51px;top:520px;width:57px;">430</div>
<div class="td" style="left:108px;top:520px;width:179px;">哈哈1</div>
<div class="td" style="left:287px;top:520px;width:143px;">18458089181</div>
<div class="td" style="left:430px;top:520px;width:332px;">Admin</div>
<div class="td" style="left:762px;top:520px;width:196px;">2021091500050110</div>
<div class="td" style="left:958px;top:520px;width:63px;">0.01</div>
<div class="td" style="left:1021px;top:520px;width:102px;">1</div>
<div class="td" style="left:1123px;top:520px;width:86px;"><span class="dot" style="background:#2c3e50"></span>拼场</div>
<div class="td" style="left:1272px;top:520px;width:204px;">2021-09-15 16:01:51</div>
<div class="td" style="left:1476px;top:520px;width:104px;"><span style="color:#2c3e50"><span class="dot" style="background:#2c3e50"></span>未支付</span></div>
<div class="abs hl" style="left:16px;top:545px;width:1628px;"></div>
<div class="cb" style="left:27px;top:554px;"></div>
<div class="td" style="left:51px;top:555px;width:57px;">429</div>
<div class="td" style="left:108px;top:555px;width:179px;">呵呵</div>
<div class="td" style="left:287px;top:555px;width:143px;">17673947422</div>
<div class="td" style="left:430px;top:555px;width:332px;">Admin</div>
<div class="td" style="left:762px;top:555px;width:196px;">2021091500093107</div>
<div class="td" style="left:958px;top:555px;width:63px;">0.01</div>
<div class="td" style="left:1021px;top:555px;width:102px;">1</div>
<div class="td" style="left:1123px;top:555px;width:86px;"><span class="dot" style="background:#2c3e50"></span>拼场</div>
<div class="td" style="left:1272px;top:555px;width:204px;">2021-09-15 15:27:06</div>
<div class="td" style="left:1476px;top:555px;width:104px;"><span style="color:#e74c3c"><span class="dot" style="background:#e74c3c"></span>未拼成</span></div>
<div class="abs hl" style="left:16px;top:580px;width:1628px;"></div>
<div class="cb" style="left:27px;top:589px;"></div>
<div class="td" style="left:51px;top:590px;width:57px;">428</div>
<div class="td" style="left:108px;top:590px;width:179px;">嗯嗯</div>
<div class="td" style="left:287px;top:590px;width:143px;">17673947423</div>
<div class="td" style="left:430px;top:590px;width:332px;">Admin</div>
<div class="td" style="left:762px;top:590px;width:196px;">2021091500087463</div>
<div class="td" style="left:958px;top:590px;width:63px;">0.01</div>
<div class="td" style="left:1021px;top:590px;width:102px;">1</div>
<div class="td" style="left:1123px;top:590px;width:86px;"><span class="dot" style="background:#2c3e50"></span>拼场</div>
<div class="td" style="left:1272px;top:590px;width:204px;">2021-09-15 15:26:25</div>
<div class="td" style="left:1476px;top:590px;width:104px;"><span style="color:#e74c3c"><span class="dot" style="background:#e74c3c"></span>未拼成</span></div>
<div class="abs hl" style="left:16px;top:615px;width:1628px;"></div>
<div class="cb" style="left:27px;top:624px;"></div>
<div class="td" style="left:51px;top:625px;width:57px;">427</div>
<div class="td" style="left:108px;top:625px;width:179px;">云迈科技@段亚楠</div>
<div class="td" style="left:287px;top:625px;width:143px;">18390228103</div>
<div class="td" style="left:430px;top:625px;width:332px;">Admin</div>
<div class="td" style="left:762px;top:625px;width:196px;">2021091400039898</div>
<div class="td" style="left:958px;top:625px;width:63px;">0.01</div>
<div class="td" style="left:1021px;top:625px;width:102px;">1</div>
<div class="td" style="left:1123px;top:625px;width:86px;"><span class="dot" style="background:#2c3e50"></span>拼场</div>
<div class="td" style="left:1272px;top:625px;width:204px;">2021-09-14 18:22:55</div>
<div class="td" style="left:1476px;top:625px;width:104px;"><span style="color:#18bc9c"><span class="dot" style="background:#18bc9c"></span>已支付</span></div>
<div class="abs" style="left:15px;top:669px;line-height:16px;color:#333;">显示第 1 到第 10 条记录，总共 189 条记录 每页显示</div>
<div class="abs" style="left:323px;top:663px;width:50px;height:31px;background:#f4f4f4;border:1px solid #ddd;border-radius:3px;line-height:29px;padding-left:12px;color:#333;font-size:12px;">10<span class="abs" style="left:29px;top:13px;width:0;height:0;border-left:4px solid transparent;border-right:4px solid transparent;border-bottom:4px solid #333;"></span></div>
<div class="abs" style="left:377px;top:669px;line-height:16px;color:#333;">条记录</div>
<div class="pgi" style="left:1170px;width:65px;background:#f9f9f9;color:#555;">上一页</div>
<div class="pgi" style="left:1234px;width:34px;background:#2c3e50;color:#fff;">1</div>
<div class="pgi" style="left:1267px;width:32px;background:#f9f9f9;color:#555;">2</div>
<div class="pgi" style="left:1298px;width:33px;background:#f9f9f9;color:#555;">3</div>
<div class="pgi" style="left:1330px;width:33px;background:#f9f9f9;color:#555;">4</div>
<div class="pgi" style="left:1362px;width:34px;background:#f9f9f9;color:#555;">5</div>
<div class="pgi" style="left:1395px;width:37px;background:#fff;color:#555;">...</div>
<div class="pgi" style="left:1431px;width:40px;background:#f9f9f9;color:#555;">19</div>
<div class="pgi" style="left:1470px;width:65px;background:#f9f9f9;color:#555;">下一页</div>
<div class="abs" style="left:1540px;top:661px;width:50px;height:31px;border:1px solid #d2d6de;background:#fff;"></div>
<div class="abs" style="left:1595px;top:662px;width:50px;height:31px;background:#f4f4f4;border:1px solid #ddd;border-radius:3px;line-height:29px;text-align:center;color:#333;font-size:12px;">跳转</div>
</div>

<div class="abs" style="left:1623px;top:840px;color:#bfc1c3;font-size:21px;line-height:26px;white-space:nowrap;">激活 Windows</div>
<div class="abs" style="left:1624px;top:867px;color:#bfc1c3;font-size:15px;line-height:18px;letter-spacing:0.5px;white-space:nowrap;">转到“设置”以激活 Windows。</div>
</body>
</html>
